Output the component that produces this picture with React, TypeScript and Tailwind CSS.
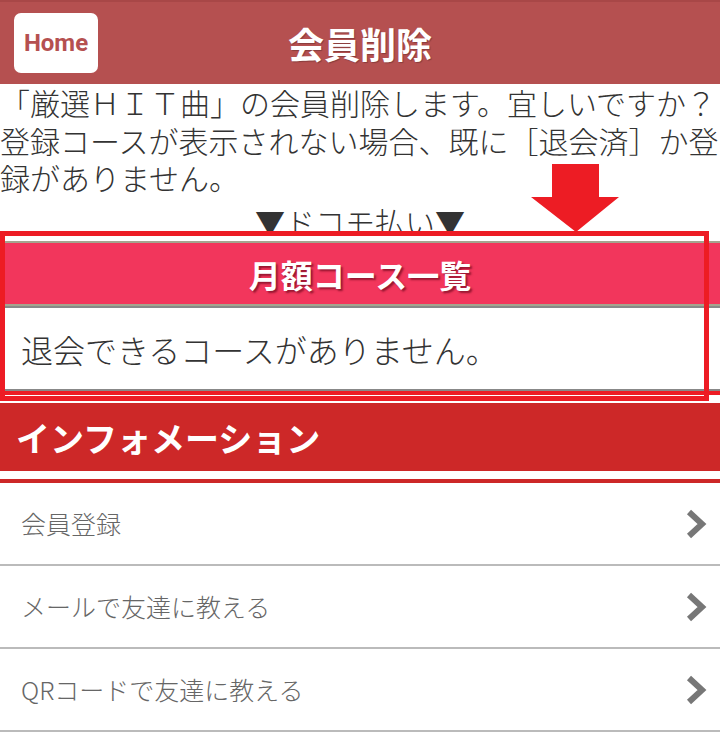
const menuItems = ['会員登録', 'メールで友達に教える', 'QRコードで友達に教える'];

const Chevron = () => (
  <svg width="22" height="30" viewBox="0 0 22 30" className="shrink-0">
    <polyline points="4,3 17,15 4,27" fill="none" stroke="#777777" strokeWidth="6" strokeLinejoin="miter" />
  </svg>
);

const DownArrow = () => (
  <svg width="88" height="68" viewBox="0 0 88 68" className="absolute left-[531px] top-[164px]">
    <polygon points="21,0 68,0 68,33 88,33 45,68 0,33 21,33" fill="#ed1c24" />
  </svg>
);

export default function App() {
  return (
    <div className="relative w-[720px] h-[733px] overflow-hidden bg-white font-['Noto_Sans_CJK_JP',sans-serif]">
      <header className="grid h-[84px] grid-cols-[1fr_auto_1fr] items-center border-t-2 border-[#a84747] bg-[#b55050]">
        <div className="flex">
          <button className="ml-[14px] flex h-[60px] w-[84px] items-center justify-center rounded-[7px] bg-white font-['Roboto',sans-serif] text-[24px] font-bold text-[#b55050]">
            Home
          </button>
        </div>
        <h1 className="text-[36px] font-bold text-white [text-shadow:1px_1px_1px_rgba(0,0,0,0.25)]">会員削除</h1>
        <div />
      </header>

      <div className="h-[147px] overflow-hidden text-[30px] font-light leading-[37.5px] text-[#333333]">
        <p className="whitespace-nowrap">「厳選ＨＩＴ曲」の会員削除します。宜しいですか？</p>
        <p className="whitespace-nowrap">登録コースが表示されない場合、既に［退会済］か登</p>
        <p className="whitespace-nowrap">録がありません。</p>
        <p className="mt-[6px] text-center">▼ドコモ払い▼</p>
      </div>

      <section className="bg-white pt-[10px]">
        <div className="border-y-2 border-[#a5a58f] bg-[#f2365c]">
          <h2 className="flex h-[61px] items-center justify-center text-[32px] font-bold text-white [text-shadow:2px_2px_2px_rgba(90,0,20,0.6)]">
            月額コース一覧
          </h2>
        </div>
        <div className="flex h-[85px] items-center border-y-2 border-[#888888] pl-[21px] text-[32px] font-light text-[#333333]">
          退会できるコースがありません。
        </div>
        <div className="h-[4px] bg-[#ed1c24]" />
      </section>

      <div className="mt-[8px] flex h-[68px] items-center bg-[#cd2828] pl-[16px] text-[34px] font-bold text-white">
        インフォメーション
      </div>

      <ul className="mt-[8px] border-t-4 border-[#cd2828]">
        {menuItems.map(item => (
          <li key={item} className="flex h-[83px] items-center justify-between border-b-2 border-[#bbbbbb] pl-[21px] pr-[13px] text-[25px] font-light text-[#666666]">
            <span>{item}</span>
            <Chevron />
          </li>
        ))}
      </ul>

      <div className="absolute left-0 top-[231px] h-[170px] w-[709px] border-[5px] border-[#ed1c24]" />
      <DownArrow />
    </div>
  );
}
